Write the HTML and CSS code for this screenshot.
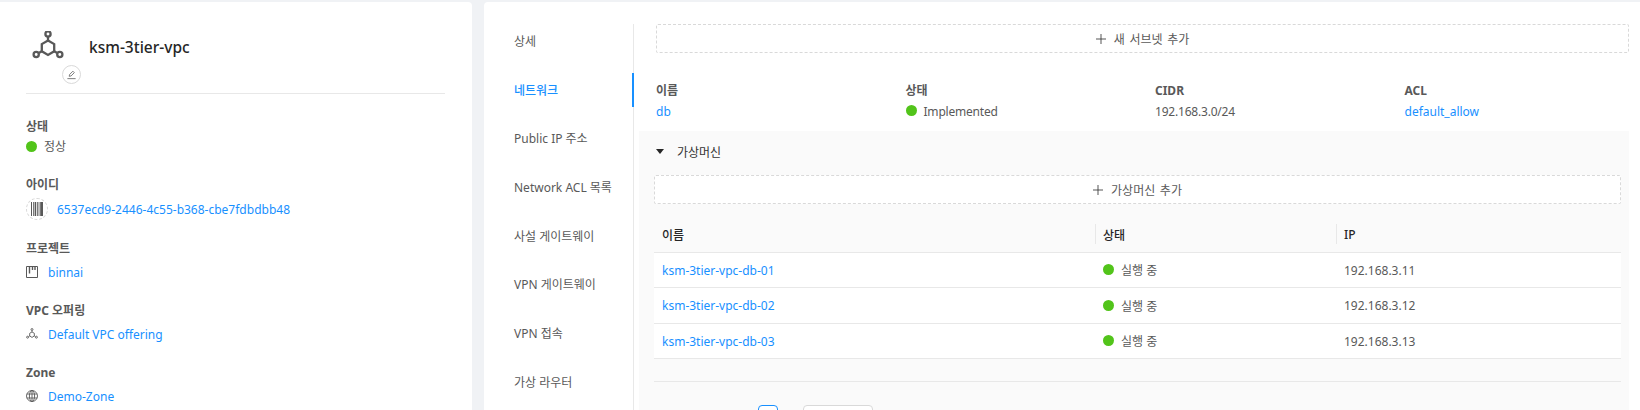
FILE: index.html
```html
<!DOCTYPE html>
<html lang="ko">
<head>
  <meta charset="UTF-8" />
  <title>ksm-3tier-vpc</title>
  <link rel="stylesheet" href="styles.css">
</head>
<body>
  <div class="page">
    <aside class="info-card">
      <div class="resource-head">
        <div class="resource-icon">
          <svg class="vpc-big" viewBox="0 0 32 30" fill="none" stroke="#595959" stroke-width="2.3">
            <path d="M16 9.5l6.2 3.6v7.2L16 24l-6.2-3.7v-7.2z" />
            <path d="M16 5.5v4M22.2 20.3l3 1.8M9.8 20.3l-3 1.8" />
            <circle cx="16" cy="3" r="2.6" />
            <circle cx="27.8" cy="23.5" r="2.6" />
            <circle cx="4.2" cy="23.5" r="2.6" />
          </svg>
          <span class="edit-btn">
            <svg viewBox="0 0 12 12" fill="none" stroke="#737373" stroke-width="1">
              <path d="M3.5 8l.4-2 3.6-3.6 1.6 1.6L5.5 7.6z" />
              <path d="M1.5 10.5h9" />
            </svg>
          </span>
        </div>
        <h1>ksm-3tier-vpc</h1>
      </div>

      <div class="field">
        <div class="field-label">상태</div>
        <div class="field-value"><span class="dot"></span>정상</div>
      </div>
      <div class="field field-id">
        <div class="field-label">아이디</div>
        <div class="field-value">
          <span class="barcode">
            <svg viewBox="0 0 12 14" fill="#595959">
              <path d="M0 0h1v14H0zM2 0h.8v14H2zM3.6 0h1.6v14H3.6zM6 0h.8v14H6zM7.6 0h.8v14h-.8zM9.2 0h2.8v14H9.2z" />
            </svg>
          </span>
          <a class="link">6537ecd9-2446-4c55-b368-cbe7fdbdbb48</a>
        </div>
      </div>
      <div class="field">
        <div class="field-label">프로젝트</div>
        <div class="field-value">
          <svg class="field-icon" viewBox="0 0 12 12" fill="none" stroke="#595959">
            <path d="M.5.5h11v11H.5z" />
            <path d="M3.5 1v6.5M6.5 1v3M9 1v3" stroke-width="1.4" />
          </svg>
          <a class="link">binnai</a>
        </div>
      </div>
      <div class="field">
        <div class="field-label">VPC 오퍼링</div>
        <div class="field-value">
          <svg class="field-icon" viewBox="0 0 32 30" fill="none" stroke="#595959" stroke-width="2.4">
            <path d="M16 9.5l6.2 3.6v7.2L16 24l-6.2-3.7v-7.2z" />
            <path d="M16 5.5v4M22.2 20.3l3 1.8M9.8 20.3l-3 1.8" />
            <circle cx="16" cy="3" r="2.6" />
            <circle cx="27.8" cy="23.5" r="2.6" />
            <circle cx="4.2" cy="23.5" r="2.6" />
          </svg>
          <a class="link">Default VPC offering</a>
        </div>
      </div>
      <div class="field">
        <div class="field-label">Zone</div>
        <div class="field-value">
          <svg class="field-icon" viewBox="0 0 12 12" fill="none" stroke="#595959" stroke-width=".9">
            <circle cx="6" cy="6" r="5.5" />
            <ellipse cx="6" cy="6" rx="2.6" ry="5.5" />
            <path d="M6 .5v11M.9 4h10.2M.9 8h10.2" />
          </svg>
          <a class="link">Demo-Zone</a>
        </div>
      </div>
    </aside>

    <main class="detail-card">
      <nav class="side-tabs">
        <a class="tab">상세</a>
        <a class="tab active">네트워크</a>
        <a class="tab">Public IP 주소</a>
        <a class="tab">Network ACL 목록</a>
        <a class="tab">사설 게이트웨이</a>
        <a class="tab">VPN 게이트웨이</a>
        <a class="tab">VPN 접속</a>
        <a class="tab">가상 라우터</a>
      </nav>

      <section class="tab-body">
        <button class="dashed-btn subnet-add">
          <svg viewBox="0 0 12 12" stroke="#333"><path d="M6 0v12M0 6h12" /></svg>
          새 서브넷 추가
        </button>

        <div class="subnet-row">
          <div>
            <div class="field-label">이름</div>
            <a class="link">db</a>
          </div>
          <div>
            <div class="field-label">상태</div>
            <div class="plain"><span class="dot"></span>Implemented</div>
          </div>
          <div>
            <div class="field-label">CIDR</div>
            <div class="plain">192.168.3.0/24</div>
          </div>
          <div>
            <div class="field-label">ACL</div>
            <a class="link">default_allow</a>
          </div>
        </div>

        <div class="collapse">
          <div class="collapse-head"><span class="arrow"></span>가상머신</div>
          <div class="collapse-body">
            <button class="dashed-btn vm-add">
              <svg viewBox="0 0 12 12" stroke="#333"><path d="M6 0v12M0 6h12" /></svg>
              가상머신 추가
            </button>

            <table class="vm-table">
              <thead>
                <tr><th>이름</th><th>상태</th><th>IP</th></tr>
              </thead>
              <tbody>
                <tr>
                  <td><a class="link">ksm-3tier-vpc-db-01</a></td>
                  <td><span class="dot"></span>실행 중</td>
                  <td>192.168.3.11</td>
                </tr>
                <tr>
                  <td><a class="link">ksm-3tier-vpc-db-02</a></td>
                  <td><span class="dot"></span>실행 중</td>
                  <td>192.168.3.12</td>
                </tr>
                <tr>
                  <td><a class="link">ksm-3tier-vpc-db-03</a></td>
                  <td><span class="dot"></span>실행 중</td>
                  <td>192.168.3.13</td>
                </tr>
              </tbody>
            </table>

            <div class="pager">
              <span class="page-num"></span>
              <span class="page-size"></span>
            </div>
          </div>
        </div>
      </section>
    </main>
  </div>
</body>
</html>
```

FILE: styles.css
```css
html, body {
  margin: 0;
  padding: 0;
  height: 410px;
  overflow: hidden;
  background-color: #f0f2f5;
  font-family: "Noto Sans", "Noto Sans CJK KR", sans-serif;
  font-size: 12px;
  color: #595959;
}

.page {
  display: flex;
  gap: 12px;
  height: 408px;
  padding-top: 2px;
}

.link {
  color: #1890ff;
}

.dot {
  display: inline-block;
  width: 11px;
  height: 11px;
  margin-right: 7px;
  border-radius: 50%;
  background-color: #52c41a;
  vertical-align: 0;
}

/* left card */
.info-card {
  box-sizing: border-box;
  width: 472px;
  padding: 0 27px 0 26px;
  background-color: #fff;
  border-radius: 0 4px 0 0;
}

.resource-head {
  display: flex;
  height: 91px;
  border-bottom: 1px solid #e8e8e8;
}

.resource-icon {
  position: relative;
  width: 63px;
}

.vpc-big {
  position: absolute;
  left: 6px;
  top: 29px;
  width: 32px;
  height: 30px;
}

.edit-btn {
  position: absolute;
  left: 36px;
  top: 63px;
  box-sizing: border-box;
  display: flex;
  align-items: center;
  justify-content: center;
  width: 19px;
  height: 19px;
  border: 1px solid #d9d9d9;
  border-radius: 50%;
  background-color: #fff;
}

.edit-btn svg {
  width: 11px;
  height: 11px;
}

h1 {
  margin: 34px 0 0;
  font-size: 15.5px;
  font-weight: 500;
  line-height: 22px;
  color: #262626;
}

.field {
  margin-top: 21px;
}

.field:nth-child(2) {
  margin-top: 24px;
}

.field-label {
  font-weight: 700;
  line-height: 18px;
}

.field-value {
  display: flex;
  align-items: center;
  height: 18px;
  margin-top: 5px;
}

.field:nth-child(2) .field-value {
  margin-top: 1px;
}

.field-id .field-value {
  margin-top: 6px;
}

.field-id + .field {
  margin-top: 22px;
}

.field-icon {
  width: 12px;
  height: 12px;
  margin-right: 10px;
}

.barcode {
  box-sizing: border-box;
  display: flex;
  align-items: center;
  justify-content: center;
  width: 22px;
  height: 22px;
  margin-right: 9px;
  border: 1px dashed #d9d9d9;
  border-radius: 50%;
}

.barcode svg {
  width: 12px;
  height: 14px;
}

/* right card */
.detail-card {
  display: flex;
  flex: 1;
  padding-top: 22px;
  background-color: #fff;
  border-radius: 4px 0 0 0;
}

.side-tabs {
  display: grid;
  grid-auto-rows: 48.67px;
  box-sizing: border-box;
  width: 150px;
  border-right: 1px solid #e8e8e8;
}

.tab {
  position: relative;
  box-sizing: border-box;
  height: 34px;
  padding-left: 30px;
  line-height: 35px;
}

.tab.active {
  color: #1890ff;
  font-weight: 500;
}

.tab.active::after {
  content: "";
  position: absolute;
  right: -1px;
  top: 0;
  width: 2px;
  height: 34px;
  background-color: #1890ff;
}

.tab-body {
  flex: 1;
  padding-left: 5px;
  padding-right: 11px;
}

.dashed-btn {
  display: flex;
  align-items: center;
  justify-content: center;
  gap: 8px;
  box-sizing: border-box;
  height: 29px;
  padding: 0;
  border: 1px dashed #d9d9d9;
  border-radius: 2px;
  background-color: #fff;
  font: inherit;
  word-spacing: 1.5px;
  color: #595959;
}

.dashed-btn svg {
  width: 10px;
  height: 10px;
}

.subnet-add {
  width: calc(100% - 17px);
  margin-left: 17px;
}

.subnet-row {
  display: grid;
  grid-template-columns: 249.5px 249.5px 249.5px 1fr;
  height: 40px;
  margin: 28px 0 0 17px;
  line-height: 20px;
}

.subnet-row .field-label {
  line-height: 19px;
  margin-bottom: 2px;
}

.plain {
  line-height: 20px;
  letter-spacing: -0.2px;
}

.collapse {
  height: 290px;
  margin-top: 10px;
  background-color: #fafafa;
}

.collapse-head {
  display: flex;
  align-items: center;
  height: 41px;
  padding-left: 17px;
  color: #333;
}

.arrow {
  width: 0;
  height: 0;
  margin-right: 13px;
  border-left: 4px solid transparent;
  border-right: 4px solid transparent;
  border-top: 5px solid #262626;
}

.collapse-body {
  padding: 3px 8px 0 15px;
}

.vm-add {
  width: 100%;
}

.vm-table {
  width: 100%;
  margin-top: 13px;
  border-collapse: collapse;
  table-layout: fixed;
}

.vm-table th {
  position: relative;
  height: 35px;
  padding: 0 8px;
  border-bottom: 1px solid #e8e8e8;
  font-weight: 500;
  text-align: left;
  color: #262626;
}

.vm-table th:nth-child(1) {
  width: 425px;
}

.vm-table th:nth-child(2) {
  width: 225px;
}

.vm-table th + th::before {
  content: "";
  position: absolute;
  left: 0;
  top: 7px;
  height: 20px;
  width: 1px;
  background-color: #e8e8e8;
}

.vm-table td {
  height: 34px;
  padding: 0 8px;
  border-bottom: 1px solid #e8e8e8;
  background-color: #fff;
}

.vm-table tr:nth-child(2) td {
  height: 35px;
}

.pager {
  display: flex;
  gap: 25px;
  height: 40px;
  margin-top: 22px;
  padding: 23px 0 0 104px;
  border-top: 1px solid #e8e8e8;
}

.page-num {
  box-sizing: border-box;
  width: 20px;
  height: 24px;
  border: 1px solid #1890ff;
  border-radius: 4px;
  background-color: #fff;
}

.page-size {
  box-sizing: border-box;
  width: 70px;
  height: 24px;
  border: 1px solid #d9d9d9;
  border-radius: 4px;
  background-color: #fff;
}
```
